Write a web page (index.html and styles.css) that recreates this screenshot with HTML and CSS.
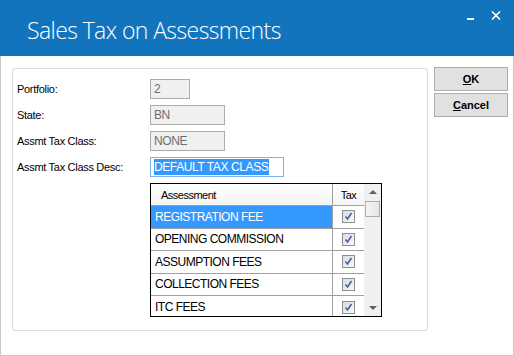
FILE: index.html
```html
<!DOCTYPE html>
<html lang="en">
<head>
    <meta charset="UTF-8">
    <title>Sales Tax on Assessments</title>
    <link rel="stylesheet" href="styles.css">
</head>
<body>
    <div class="window">
        <!-- title bar -->
        <div class="titlebar">
            <h1 class="title">Sales Tax on Assessments</h1>
            <div class="caption-btns">
                <span class="cap-min"></span>
                <svg class="cap-close" width="10" height="9" viewBox="0 0 10 9">
                    <path d="M1 0.5 L9 8.5 M9 0.5 L1 8.5" stroke="#fff" stroke-width="1.6"/>
                </svg>
            </div>
        </div>

        <div class="content">
            <div class="group">
                <div class="form-row">
                    <label>Portfolio:</label>
                    <div class="field disabled short">2</div>
                </div>
                <div class="form-row">
                    <label>State:</label>
                    <div class="field disabled">BN</div>
                </div>
                <div class="form-row">
                    <label>Assmt Tax Class:</label>
                    <div class="field disabled">NONE</div>
                </div>
                <div class="form-row">
                    <label>Assmt Tax Class Desc:</label>
                    <div class="field focused"><span class="sel">DEFAULT TAX CLASS</span></div>
                </div>

                <!-- assessment grid -->
                <div class="grid">
                    <div class="grid-body">
                        <div class="grid-row header">
                            <div class="cell name">Assessment</div>
                            <div class="cell tax">Tax</div>
                        </div>
                        <div class="grid-row selected">
                            <div class="cell name">REGISTRATION FEE</div>
                            <div class="cell tax"><span class="check"></span></div>
                        </div>
                        <div class="grid-row">
                            <div class="cell name">OPENING COMMISSION</div>
                            <div class="cell tax"><span class="check"></span></div>
                        </div>
                        <div class="grid-row">
                            <div class="cell name">ASSUMPTION FEES</div>
                            <div class="cell tax"><span class="check"></span></div>
                        </div>
                        <div class="grid-row">
                            <div class="cell name">COLLECTION FEES</div>
                            <div class="cell tax"><span class="check"></span></div>
                        </div>
                        <div class="grid-row last">
                            <div class="cell name">ITC FEES</div>
                            <div class="cell tax"><span class="check"></span></div>
                        </div>
                    </div>
                    <div class="scrollbar">
                        <div class="arrow up"></div>
                        <div class="thumb"></div>
                        <div class="track"></div>
                        <div class="arrow down"></div>
                    </div>
                </div>
            </div>

            <div class="buttons">
                <button class="btn"><u>O</u>K</button>
                <button class="btn"><u>C</u>ancel</button>
            </div>
        </div>
    </div>
</body>
</html>
```

FILE: styles.css
```css
* {
    margin: 0;
    padding: 0;
    box-sizing: border-box;
}

body {
    width: 514px;
    height: 356px;
    background-color: #fff;
    font-family: 'Liberation Sans', Arial, sans-serif;
    font-size: 11px;
    color: #000;
    overflow: hidden;
}

.window {
    width: 514px;
    height: 356px;
    border: 1px solid #c9c9c9;
    border-top: none;
    display: flex;
    flex-direction: column;
}

.titlebar {
    height: 56px;
    margin: 0 -1px;
    background-color: #1174bd;
    display: flex;
    justify-content: space-between;
    align-items: flex-start;
    color: #fff;
}

.title {
    font-family: 'Open Sans', sans-serif;
    font-weight: 300;
    font-size: 23px;
    letter-spacing: -0.6px;
    padding: 14px 0 0 27px;
    line-height: 32px;
}

.caption-btns {
    display: flex;
    align-items: flex-start;
    gap: 17px;
    padding: 11px 13px 0 0;
}

.cap-min {
    display: block;
    width: 7px;
    height: 2px;
    margin-top: 7px;
    background-color: #fff;
}

.content {
    display: flex;
    padding: 12px 0 0 11px;
    gap: 6px;
}

/* group box */
.group {
    width: 416px;
    height: 263px;
    border: 1px solid #d5dee5;
    border-radius: 3px;
    padding: 10px 0 0 4px;
    display: flex;
    flex-direction: column;
    gap: 6px;
}

.form-row {
    display: flex;
    align-items: center;
    height: 20px;
}

.form-row label {
    width: 133px;
    letter-spacing: -0.3px;
}

.field {
    height: 20px;
    width: 75px;
    border: 1px solid #acacac;
    padding: 0 3px;
    line-height: 18px;
    font-size: 12px;
    letter-spacing: -0.4px;
}

.field.short {
    width: 40px;
}

.field.disabled {
    background-color: #f0f0f0;
    color: #6d6d6d;
}

.field.focused {
    width: 134px;
    border-color: #7eb4ea;
}

.sel {
    background-color: #3399ff;
    color: #fff;
    display: inline-block;
    line-height: 16px;
    padding-right: 1px;
}

/* grid */
.grid {
    margin-left: 133px;
    width: 232px;
    height: 134px;
    border: 1px solid #000;
    display: flex;
    overflow: hidden;
}

.grid-body {
    flex: 1;
}

.grid-row {
    display: flex;
    height: 22.5px;
    border-bottom: 1px solid #a0a0a0;
    font-size: 12px;
    letter-spacing: -0.5px;
}

.grid-row.header {
    height: 22px;
    font-size: 11px;
    background: linear-gradient(#ffffff, #f4f4f4);
}

.grid-row.last {
    border-bottom: none;
}

.cell {
    display: flex;
    align-items: center;
}

.cell.name {
    flex: 1;
    padding-left: 4px;
    border-right: 1px solid #a0a0a0;
}

.header .cell.name {
    padding-left: 10px;
}

.cell.tax {
    width: 31px;
    justify-content: center;
}

.selected .cell.name {
    background-color: #3399ff;
    color: #fff;
}

.check {
    width: 13px;
    height: 13px;
    border: 1px solid #8e8f8f;
    background-image: url("data:image/svg+xml,%3Csvg xmlns='http://www.w3.org/2000/svg' width='11' height='11'%3E%3Cpath d='M2.5 5.5 L4.5 8 L8.5 2' fill='none' stroke='%234a5fa6' stroke-width='1.6'/%3E%3C/svg%3E"), linear-gradient(135deg, #dcdcdc, #f8f8f8);
}

.scrollbar {
    width: 17px;
    background-color: #f0f0f0;
    display: flex;
    flex-direction: column;
    align-items: center;
}

.arrow {
    height: 17px;
    width: 17px;
    display: flex;
    justify-content: center;
}

.arrow.up::after,
.arrow.down::after {
    content: "";
    width: 0;
    height: 0;
    border-left: 4px solid transparent;
    border-right: 4px solid transparent;
}

.arrow.up::after {
    margin-top: 6px;
    border-bottom: 4px solid #606060;
}

.arrow.down::after {
    margin-top: 7px;
    border-top: 4px solid #606060;
}

.thumb {
    width: 15px;
    height: 16px;
    border: 1px solid #adadad;
    background: linear-gradient(to right, #f4f4f4, #e6e6e6);
}

.track {
    flex: 1;
}

/* buttons */
.buttons {
    display: flex;
    flex-direction: column;
    gap: 2px;
    margin-top: -1px;
}

.btn {
    width: 74px;
    height: 24px;
    background-color: #e1e1e1;
    border: 1px solid #adadad;
    font-family: 'Liberation Sans', Arial, sans-serif;
    font-size: 11px;
    font-weight: bold;
    color: #000;
}
```
